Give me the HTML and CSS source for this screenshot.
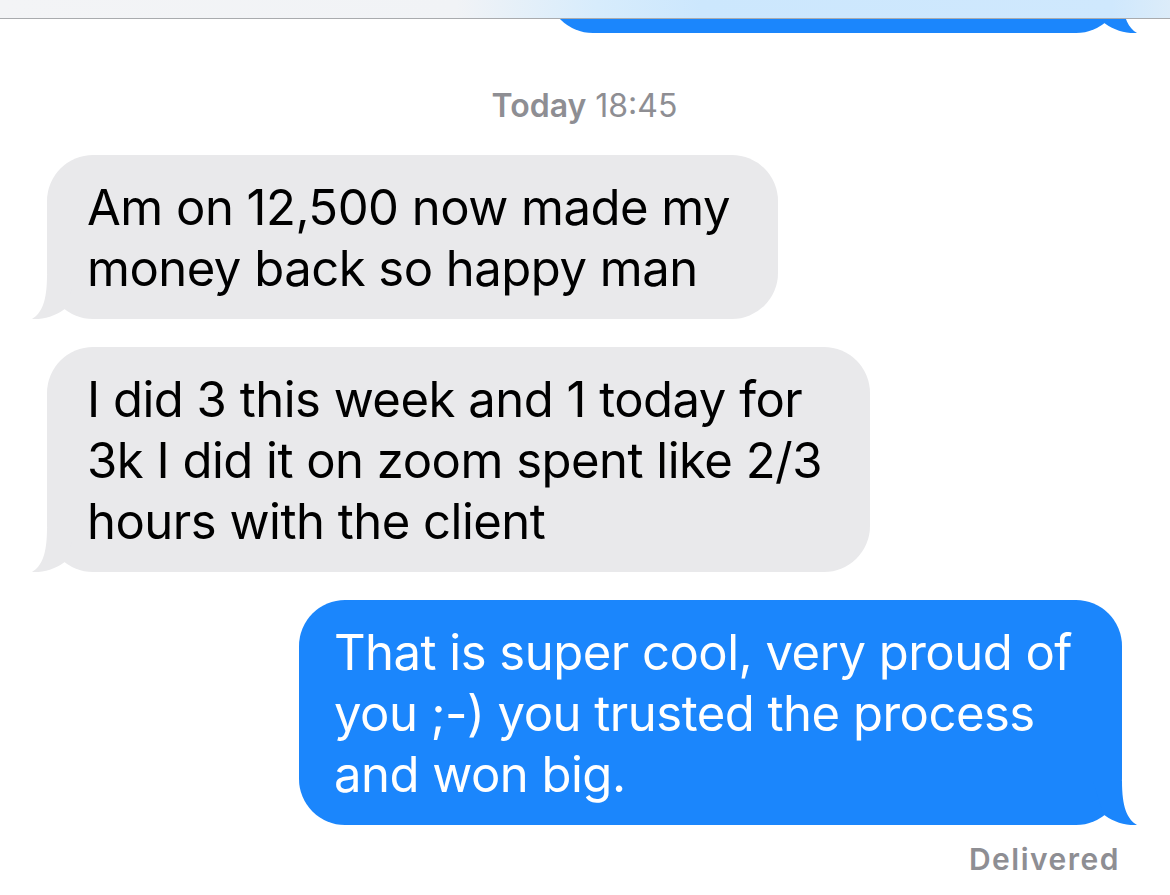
FILE: index.html
```html
<!DOCTYPE html>
<html lang="en">
<head>
<meta charset="utf-8">
<title>Messages</title>
<link rel="stylesheet" href="styles.css">
</head>
<body>
<div class="topbar"></div>
<main class="thread">
  <div class="bubble me partial">
    <svg class="tail" viewBox="0 0 50 44" aria-hidden="true"><path d="M16 0 C16 26 11 38 1 44 C13 45 27 40 35 33 L45 0 Z"/></svg>
  </div>

  <div class="stamp"><span class="day">Today</span> 18:45</div>

  <div class="bubble them first">Am on 12,500 now made my<br>money back so happy man
    <svg class="tail" viewBox="0 0 50 44" aria-hidden="true"><path d="M16 0 C16 26 11 38 1 44 C13 45 27 40 35 33 L45 0 Z"/></svg>
  </div>

  <div class="bubble them">I did 3 this week and 1 today for<br>3k I did it on zoom spent like 2/3<br>hours with the client
    <svg class="tail" viewBox="0 0 50 44" aria-hidden="true"><path d="M16 0 C16 26 11 38 1 44 C13 45 27 40 35 33 L45 0 Z"/></svg>
  </div>

  <div class="bubble me">That is super cool, very proud of<br>you ;-) you trusted the process<br>and won big.
    <svg class="tail" viewBox="0 0 50 44" aria-hidden="true"><path d="M16 0 C16 26 11 38 1 44 C13 45 27 40 35 33 L45 0 Z"/></svg>
  </div>

  <div class="status">Delivered</div>
</main>
</body>
</html>
```
FILE: styles.css
```css
html, body {
  margin: 0;
  padding: 0;
  background: #ffffff;
}

body {
  font-family: Inter, "Liberation Sans", sans-serif;
  width: 1170px;
  height: 895px;
  overflow: hidden;
  position: relative;
}

.topbar {
  position: absolute;
  top: 0;
  left: 0;
  right: 0;
  height: 18px;
  border-bottom: 1px solid #a9abae;
  background: linear-gradient(90deg, #f3f4f6 0%, #f1f3f6 39%, #d7ecfc 51%, #cce7fd 60%, #cfe8fd 95%, #dcecf9 100%);
  z-index: 5;
}

.thread {
  display: flex;
  flex-direction: column;
  padding: 0 48px 0 47px;
}

.bubble {
  position: relative;
  font-size: 49px;
  line-height: 61px;
  letter-spacing: -0.5px;
  white-space: nowrap;
  border-radius: 46px;
  padding: 22px 48px 20px 40px;
}

.bubble .tail {
  position: absolute;
  bottom: 0;
  width: 50px;
  height: 44px;
}

.them {
  align-self: flex-start;
  background: #e9e9eb;
  color: #000000;
  margin-top: 28px;
}

.them .tail {
  left: -16px;
  fill: #e9e9eb;
}

.them.first {
  margin-top: 29px;
}

.me {
  align-self: flex-end;
  background: #1b86fc;
  color: #ffffff;
  margin-top: 28px;
  padding-left: 35px;
  padding-right: 50px;
}

.me .tail {
  right: -16px;
  fill: #1b86fc;
  transform: scaleX(-1);
}

.partial {
  margin-top: -67px;
  height: 100px;
  width: 575px;
  padding: 0;
  box-sizing: border-box;
}

.stamp {
  align-self: center;
  margin-top: 53px;
  font-size: 32px;
  line-height: 40px;
  color: #8e8e93;
}

.stamp .day {
  font-weight: 600;
}

.status {
  align-self: flex-end;
  margin-top: 17px;
  margin-right: 2px;
  font-size: 30px;
  line-height: 34px;
  letter-spacing: 1.5px;
  font-weight: 600;
  color: #8e8e93;
}
```
